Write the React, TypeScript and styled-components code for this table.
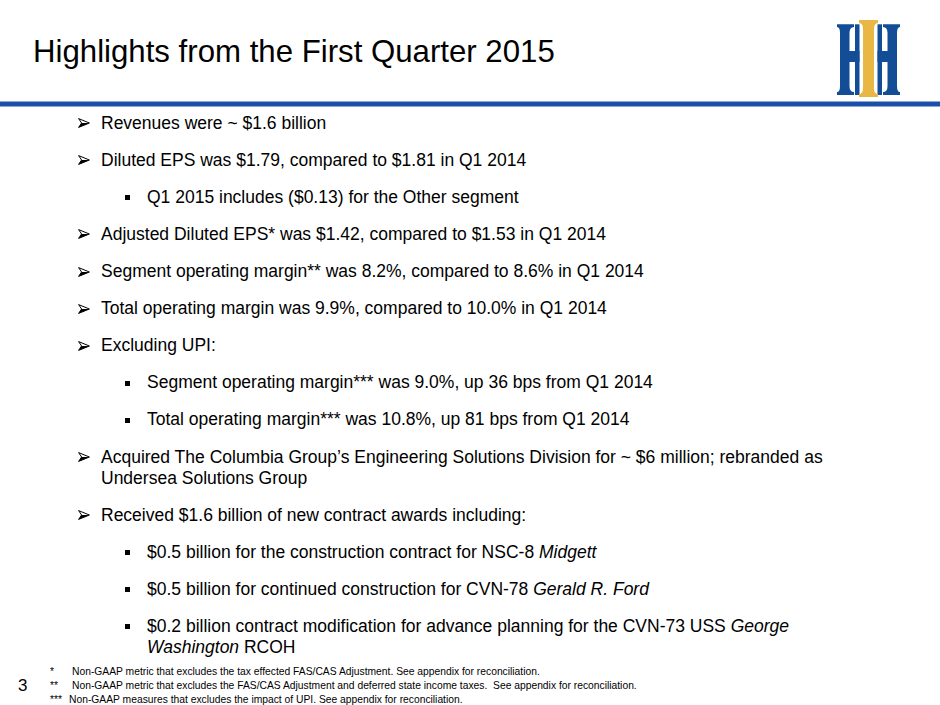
import React from "react";
import styled, { createGlobalStyle } from "styled-components";

const Global = createGlobalStyle`
  html, body { margin: 0; padding: 0; background: #fff; }
  body { font-family: "Liberation Sans", Arial, sans-serif; color: #000; }
  #root { width: 940px; height: 705px; overflow: hidden; }
`;

const Slide = styled.div`
  width: 940px;
  height: 705px;
  display: flex;
  flex-direction: column;
  background: #fff;
  overflow: hidden;
  & > * { flex-shrink: 0; }
`;

const Header = styled.header`
  height: 101px;
  display: flex;
  justify-content: space-between;
  align-items: flex-start;
  box-sizing: border-box;
  padding-left: 33px;
  padding-right: 30px;
`;

const Title = styled.h1`
  margin: 34px 0 0 0;
  font-size: 31.2px;
  line-height: 36px;
  font-weight: 400;
  white-space: nowrap;
`;

const LogoWrap = styled.div`
  margin-top: 15px;
  width: 80px;
  height: 85px;
`;

const Rule = styled.div`
  height: 4px;
  background: #1b4ea6;
  border-top: 1px solid #8ba8da;
  border-bottom: 1px solid #8ba8da;
`;

const List = styled.ul`
  list-style: none;
  margin: 0;
  padding: 5.7px 80px 0 0;
  display: flex;
  flex-direction: column;
  gap: 16.1px;
`;

const Item = styled.li<{ $level: number }>`
  display: flex;
  align-items: flex-start;
  padding-left: ${(p) => (p.$level === 1 ? 78 : 125)}px;
  font-size: 17.5px;
  line-height: 21px;
`;

const Marker = styled.span<{ $level: number }>`
  flex: 0 0 ${(p) => (p.$level === 1 ? 23 : 22)}px;
  height: 21px;
  display: flex;
  align-items: center;
`;

const Square = styled.span`
  width: 5px;
  height: 5px;
  background: #000;
  margin-top: 1px;
`;

const ItemText = styled.span`
  flex: 1;
  em { font-style: italic; }
`;

const Footer = styled.footer`
  margin-top: 7px;
  display: flex;
  align-items: center;
`;

const PageNum = styled.div`
  width: 50px;
  box-sizing: border-box;
  padding-left: 18px;
  padding-top: 1px;
  font-size: 17px;
  line-height: 20px;
`;

const Notes = styled.div`
  display: flex;
  flex-direction: column;
  font-size: 10.3px;
  line-height: 14px;
`;

const Note = styled.div`
  display: flex;
  white-space: pre;
`;

const NoteMark = styled.span<{ $w: number }>`
  flex: 0 0 ${(p) => p.$w}px;
`;

const Arrow = () => (
  <svg width="12" height="10" viewBox="0 0 12 10">
    <polygon points="0.6,0.6 11.4,5 0.6,9.4 3.6,5" fill="#fff" stroke="#000" strokeWidth="1" strokeLinejoin="miter" />
    <polygon points="3.6,5 11.4,5 0.6,9.4" fill="#000" />
  </svg>
);

const Logo = () => (
  <svg width="80" height="85" viewBox="0 0 80 85">
    <g fill="#124d96">
      <g>
        <path d="M7,9.3 H24 V12 Q19.5,12 19.5,18 V71 Q19.5,77 24,77 V80 H7 V77 Q10,77 10,71 V18 Q10,12 7,12 Z" />
        <rect x="19" y="36" width="10.5" height="11" />
        <rect x="25" y="9.3" width="4.5" height="70.7" />
      </g>
      <g transform="translate(77,0) scale(-1,1)">
        <path d="M7,9.3 H24 V12 Q19.5,12 19.5,18 V71 Q19.5,77 24,77 V80 H7 V77 Q10,77 10,71 V18 Q10,12 7,12 Z" />
        <rect x="19" y="36" width="10.5" height="11" />
        <rect x="25" y="9.3" width="4.5" height="70.7" />
      </g>
    </g>
    <path
      fill="#e9b844"
      d="M29,5 H48 V8 Q44,8 44,14 V73 Q44,79 48,79 V82 H29 V79 Q33,79 33,73 V14 Q33,8 29,8 Z"
    />
  </svg>
);

type Row = { level: number; content: React.ReactNode };

const rows: Row[] = [
  { level: 1, content: "Revenues were ~ $1.6 billion" },
  { level: 1, content: "Diluted EPS was $1.79, compared to $1.81 in Q1 2014" },
  { level: 2, content: "Q1 2015 includes ($0.13) for the Other segment" },
  { level: 1, content: "Adjusted Diluted EPS* was $1.42, compared to $1.53 in Q1 2014" },
  { level: 1, content: "Segment operating margin** was 8.2%, compared to 8.6% in Q1 2014" },
  { level: 1, content: "Total operating margin was 9.9%, compared to 10.0% in Q1 2014" },
  { level: 1, content: "Excluding UPI:" },
  { level: 2, content: "Segment operating margin*** was 9.0%, up 36 bps from Q1 2014" },
  { level: 2, content: "Total operating margin*** was 10.8%, up 81 bps from Q1 2014" },
  {
    level: 1,
    content:
      "Acquired The Columbia Group\u2019s Engineering Solutions Division for ~ $6 million; rebranded as Undersea Solutions Group",
  },
  { level: 1, content: "Received $1.6 billion of new contract awards including:" },
  {
    level: 2,
    content: (
      <>
        $0.5 billion for the construction contract for NSC-8 <em>Midgett</em>
      </>
    ),
  },
  {
    level: 2,
    content: (
      <>
        $0.5 billion for continued construction for CVN-78 <em>Gerald R. Ford</em>
      </>
    ),
  },
  {
    level: 2,
    content: (
      <>
        $0.2 billion contract modification for advance planning for the CVN-73 USS <em>George</em>{" "}
        <em>Washington</em> RCOH
      </>
    ),
  },
];

const notes = [
  { mark: "*", w: 22, text: "Non-GAAP metric that excludes the tax effected FAS/CAS Adjustment. See appendix for reconciliation." },
  {
    mark: "**",
    w: 22,
    text: "Non-GAAP metric that excludes the FAS/CAS Adjustment and deferred state income taxes.  See appendix for reconciliation.",
  },
  { mark: "***", w: 19, text: "Non-GAAP measures that excludes the impact of UPI. See appendix for reconciliation." },
];

export default function App() {
  return (
    <>
      <Global />
      <Slide>
        <Header>
          <Title>Highlights from the First Quarter 2015</Title>
          <LogoWrap>
            <Logo />
          </LogoWrap>
        </Header>
        <Rule />
        <List>
          {rows.map((r, i) => (
            <Item key={i} $level={r.level}>
              <Marker $level={r.level}>{r.level === 1 ? <Arrow /> : <Square />}</Marker>
              <ItemText>{r.content}</ItemText>
            </Item>
          ))}
        </List>
        <Footer>
          <PageNum>3</PageNum>
          <Notes>
            {notes.map((n, i) => (
              <Note key={i}>
                <NoteMark $w={n.w}>{n.mark}</NoteMark>
                <span>{n.text}</span>
              </Note>
            ))}
          </Notes>
        </Footer>
      </Slide>
    </>
  );
}
